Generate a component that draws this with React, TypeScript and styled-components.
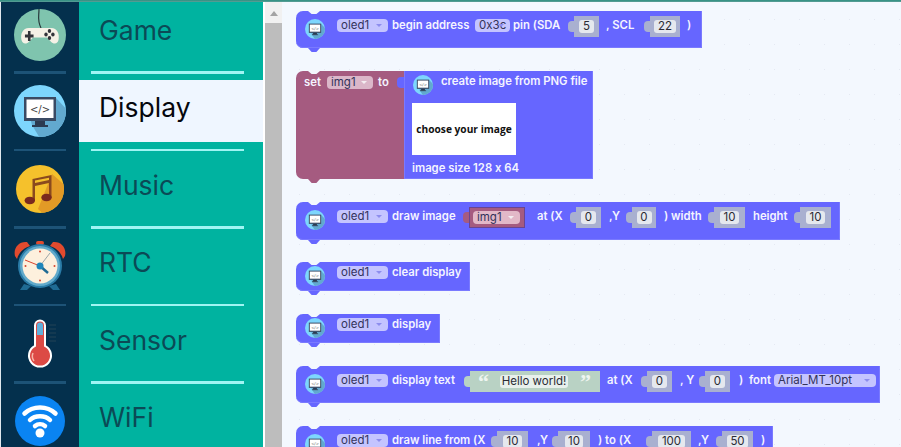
import React from "react";
import styled, { createGlobalStyle } from "styled-components";

const Global = createGlobalStyle`
  html, body { margin: 0; padding: 0; width: 901px; height: 447px; overflow: hidden; background: #f3f8fe; }
  * { box-sizing: border-box; }
`;

const Page = styled.div`
  width: 901px; height: 447px; display: flex; flex-direction: column; overflow: hidden;
  font-family: "Inter", "Noto Sans", sans-serif; font-feature-settings: "calt" 0;
`;
const TopLine = styled.div`
  height: 2px; flex: none;
  background: linear-gradient(#2c8f80, #5f9f98);
`;
const Main = styled.div`display: flex; flex: 1; min-height: 0;`;
const Rail = styled.div`
  width: 79px; flex: none; background: #04304d; border-left: 1px solid #dfe8ee;
  display: flex; flex-direction: column; align-items: center; overflow: hidden;
`;
const RailCell = styled.div<{ $h: number }>`
  height: ${p => p.$h}px; width: 100%; flex: none; display: flex; align-items: center; justify-content: center;
`;
const RailRule = styled.div`height: 2.5px; width: 52px; flex: none; background: #1d5377; margin-right: 1px;`;
const Menu = styled.div`
  width: 184px; flex: none; background: #00b3a0; display: flex; flex-direction: column; overflow: hidden;
`;
const MenuItem = styled.div<{ $active?: boolean; $first?: boolean }>`
  flex: none; height: ${p => (p.$first ? 62.5 : 62)}px; margin-bottom: 6.5px; margin-top: ${p => (p.$first ? 0 : 6.5)}px;
  padding: 0 0 7px 20px;
  display: flex; align-items: center;
  font-size: 26.5px; line-height: 1;
  color: ${p => (p.$active ? "#05070d" : "#0b4a56")};
  background: ${p => (p.$active ? "#eff6ff" : "transparent")};
`;
const MenuRule = styled.div`height: 2.5px; width: 153px; margin-left: 12px; background: #9ff5f3; flex: none;`;
const Gutter = styled.div`width: 2px; flex: none; background: #fff;`;
const Scrollbar = styled.div`width: 17px; flex: none; display: flex; flex-direction: column; background: #bdbdbd;`;
const ScrollButton = styled.div`
  height: 21px; background: #f1f1f1; flex: none; display: flex; justify-content: center; padding-top: 9px;
  &::before { content: ""; border-left: 4.5px solid transparent; border-right: 4.5px solid transparent; border-bottom: 5px solid #a3a3a3; height: 0; width: 0; }
`;
const Workspace = styled.div`
  flex: 1; position: relative; overflow: hidden; margin-left: 1px; background-color: #f3f8fe;
  background-image: radial-gradient(circle, #e4e9f2 0.8px, transparent 1px);
  background-size: 25px 25px; background-position: 4px 5px;
`;
const Block = styled.div<{ $y: number; $w: number; $h: number; $pt?: number }>`
  position: absolute; left: 13px; top: ${p => p.$y}px; width: ${p => p.$w}px; height: ${p => p.$h}px;
  background: #6666ff; border-radius: 7px 0 0 7px;
  display: flex; align-items: flex-start; padding: ${p => p.$pt ?? 8}px 0 0 8px; color: #fff;
  box-shadow: inset 0 -1px 0 #7a7aff, inset -1px 0 0 #7a7aff;
  &::before { content: ""; position: absolute; left: 12px; top: 0; width: 12px; height: 3px; background: #f3f8fe; clip-path: polygon(0 0, 100% 0, 70% 100%, 30% 100%); }
  &::after { content: ""; position: absolute; left: 12px; bottom: -4px; width: 12px; height: 4px; background: #6666ff; clip-path: polygon(0 0, 100% 0, 70% 100%, 30% 100%); }
`;
const Label = styled.span<{ $ml?: number; $w?: number }>`
  margin-left: ${p => p.$ml ?? 0}px; width: ${p => (p.$w ? `${p.$w}px` : "auto")}; flex: none;
  font-size: 11.3px; font-weight: 600; white-space: nowrap; line-height: 13px; color: #f4f4ff;
`;
const Drop = styled.div<{ $ml?: number; $w: number; $tone?: "violet" | "rose" | "pink" }>`
  margin-left: ${p => p.$ml ?? 0}px; width: ${p => p.$w}px; height: 13px; flex: none; border-radius: 4px;
  background: ${p => (p.$tone === "rose" ? "#dbb7c9" : p.$tone === "pink" ? "#e2b8c8" : "#c4c4ff")};
  color: #33335a; font-size: 11.5px; line-height: 13px; padding-left: 4px; position: relative;
  white-space: nowrap;
  &::after { content: ""; position: absolute; right: 6px; top: 5px; border-left: 3px solid transparent; border-right: 3px solid transparent; border-top: 3.5px solid ${p => (p.$tone ? "#f4eef2" : "#8d8dee")}; }
`;
const Socket = styled.div<{ $ml?: number; $w: number }>`
  margin-left: ${p => p.$ml ?? 0}px; margin-top: -3px; width: ${p => p.$w}px; height: 21px; flex: none; position: relative;
  background: #a9b0d0; display: flex; align-items: center; justify-content: center;
  &::before { content: ""; position: absolute; left: -6px; top: 5px; width: 6px; height: 11px; background: #a9b0d0; border-radius: 4px 0 0 4px; }
`;
const NumField = styled.div`
  height: 13px; min-width: 15px; padding: 0 3.5px; border-radius: 3px; background: #e5e8ee; color: #2b2b33;
  font-size: 11.5px; line-height: 13px; text-align: center;
`;
const VarSocket = styled.div<{ $ml: number; $w: number }>`
  margin-left: ${p => p.$ml}px; margin-top: -3px; width: ${p => p.$w}px; height: 21px; flex: none; position: relative;
  background: #a55b80; border: 1px solid #6a4590; display: flex; align-items: center; padding-left: 3px;
  &::before { content: ""; position: absolute; left: -7px; top: 4px; width: 6px; height: 11px; background: #a55b80; border-radius: 4px 0 0 4px; }
`;
const TextSocket = styled.div<{ $ml: number; $w: number }>`
  margin-left: ${p => p.$ml}px; margin-top: -3px; width: ${p => p.$w}px; height: 21px; flex: none; position: relative; background: #b9d2c4;
  display: flex; align-items: center; color: #eef5f0;
  &::before { content: ""; position: absolute; left: -6px; top: 5px; width: 6px; height: 11px; background: #b9d2c4; border-radius: 4px 0 0 4px; }
`;
const Quote = styled.span<{ $ml: number }>`
  margin-left: ${p => p.$ml}px; width: 10px; flex: none; text-align: center;
  font-family: "Liberation Serif", serif; font-weight: 700; font-size: 22px; line-height: 13px; height: 13px;
`;
const TextField = styled.div`
  width: 68px; height: 13px; margin-left: 12px; border-radius: 3px; background: #e8f0ec; color: #2b2b33; font-size: 11.5px; line-height: 13px; text-align: center;
`;
const SetBlock = styled.div`
  position: absolute; left: 13px; top: 69px; width: 108px; height: 108px; background: #a55b80; border-radius: 7px 0 0 7px;
  padding: 5px 0 0 8px; display: flex; align-items: flex-start; color: #fff;
  &::before { content: ""; position: absolute; left: 12px; top: 0; width: 12px; height: 3px; background: #f3f8fe; clip-path: polygon(0 0, 100% 0, 70% 100%, 30% 100%); }
  &::after { content: ""; position: absolute; left: 12px; bottom: -4px; width: 12px; height: 4px; background: #a55b80; clip-path: polygon(0 0, 100% 0, 70% 100%, 30% 100%); }
`;
const ImageBlock = styled.div`
  position: absolute; left: 121px; top: 69px; width: 189px; height: 108px; background: #6666ff;
  padding: 4px 0 0 8px; display: flex; flex-direction: column; align-items: flex-start; color: #fff;
  box-shadow: inset 0 -1px 0 #7a7aff, inset -1px 0 0 #7a7aff, inset 1px 0 0 #7a7aff;
  &::before { content: ""; position: absolute; left: -7px; top: 6px; width: 7px; height: 11px; background: #6666ff; border-radius: 4px 0 0 4px; }
`;
const ImageHead = styled.div`display: flex; align-items: flex-start; height: 28px; flex: none;`;
const ImagePicker = styled.div`
  width: 104px; height: 52px; flex: none; background: #fff; display: flex; align-items: center; justify-content: center;
  font-family: "Open Sans", sans-serif; font-weight: 700; font-size: 10.2px; color: #111;
`;
const ImageCaption = styled(Label)`margin-top: 7px;`;
const IconSlot = styled.div`width: 21px; height: 20px; flex: none; display: flex; justify-content: center;`;
const ShiftUp = styled.div`margin-top: -12px; display: flex;`;

const Pad = () => (
  <ShiftUp>
    <svg width="52" height="60" viewBox="0 0 52 60">
      <circle cx="26" cy="34" r="26" fill="#7fc4ae" />
      <path d="M27 27 C 23 19 25 16 25 8" stroke="#283a3c" strokeWidth="1.200" fill="none" />
      <g transform="translate(26 35) scale(.86 1) translate(-26 -32)">
        <path d="M13 24 H39 C 46 24 49 30 47.500 36 C 46.500 40 42 41 38 37 L34 33.500 H18 L14 37 C 10 41 5.500 40 4.500 36 C 3 30 6 24 13 24 Z" fill="#f5f1e6" />
        <path d="M12 27 h3 v3.500 h3.500 v3 h-3.500 v3.500 h-3 v-3.500 h-3.500 v-3 h3.500 z" fill="#33343a" />
        <circle cx="37" cy="27" r="2" fill="#33343a" /><circle cx="37" cy="34" r="2" fill="#33343a" /><circle cx="33" cy="30.500" r="2" fill="#33343a" /><circle cx="41" cy="30.500" r="2" fill="#33343a" />
      </g>
    </svg>
  </ShiftUp>
);
const MonitorIcon = ({ size, id }: { size: number; id: string }) => (
  <svg width={size} height={size} viewBox="0 0 52 52">
    <defs><clipPath id={id}><circle cx="26" cy="26" r="26" /></clipPath></defs>
    <circle cx="26" cy="26" r="26" fill="#7dd6fd" />
    <path d="M10 13 L42 13 L58 30 L58 60 L30 60 L18 40 Z" fill="#62a9cf" clipPath={`url(#${id})`} />
    <rect x="10" y="12" width="32" height="24" fill="#3a4a63" />
    <rect x="12.500" y="14.500" width="27" height="18.500" fill="#fff" />
    <rect x="21" y="36" width="10" height="4.500" fill="#2c3a50" />
    <rect x="18" y="40" width="16" height="2" fill="#2c3a50" />
    <text x="26" y="27.500" fontSize="10" fontFamily="DejaVu Sans, sans-serif" textAnchor="middle" fill="#444">{"</>"}</text>
  </svg>
);
const Music = () => (
  <svg width="48" height="48" viewBox="0 0 48 48">
    <defs><clipPath id="mu"><circle cx="24" cy="24" r="24" /></clipPath></defs>
    <circle cx="24" cy="24" r="24" fill="#f5c12c" />
    <path d="M36 9 L60 30 L40 60 L22 44 Z" fill="#e29a26" clipPath="url(#mu)" />
    <path d="M16.500 14 L35.500 10 V33 H33 V18 L19 21 V36 H16.500 Z" fill="#8a4a1e" />
    <path d="M19 15.500 L33 12.700 V15 L19 18 Z" fill="#f5c12c" />
    <ellipse cx="13.800" cy="35.500" rx="5.200" ry="3.800" fill="#7a2a1e" />
    <ellipse cx="30.500" cy="32.500" rx="5.200" ry="3.800" fill="#7a2a1e" />
  </svg>
);
const Clock = () => (
  <svg width="54" height="52" viewBox="0 0 54 52">
    <path d="M2 16 C 0 8 6 1 14 2 L 17 6 C 11 8 6 12 4 19 Z" fill="#e14a2e" />
    <path d="M52 16 C 54 8 48 1 40 2 L 37 6 C 43 8 48 12 50 19 Z" fill="#e14a2e" />
    <rect x="23" y="1" width="8" height="4" rx="2" fill="#e14a2e" />
    <path d="M11 44 L7 50 H14 L18 46 Z M43 44 L47 50 H40 L36 46 Z" fill="#1f6b94" />
    <circle cx="27" cy="26" r="22" fill="#2a7ca8" />
    <circle cx="27" cy="26" r="20" fill="#62aacb" />
    <circle cx="27" cy="26" r="17.500" fill="#fdf0dd" />
    <path d="M27 26 L37 13" stroke="#9aa6a8" strokeWidth="1" />
    <path d="M27 26 L12 20" stroke="#d9442e" strokeWidth="1" />
    <path d="M27 26 L35 33" stroke="#1f6b94" strokeWidth="2.500" />
    <circle cx="27" cy="26" r="3.500" fill="#1f86ba" />
    <g fill="#d9442e"><circle cx="27" cy="11.500" r="1" /><circle cx="27" cy="40.500" r="1" /><circle cx="12.500" cy="26" r="1" /><circle cx="41.500" cy="26" r="1" /></g>
  </svg>
);
const Thermo = () => (
  <svg width="30" height="48" viewBox="0 0 30 48" overflow="visible">
    <path d="M10 5.500 a5 5 0 0 1 10 0 V25.800 a11 11 0 1 1 -10 0 Z" fill="#dc4a45" stroke="#fff" strokeWidth="2" />
    <path d="M12 5.500 a3 3 0 0 1 6 0 V15 H12 Z" fill="#62b0dc" />
    <path d="M9 41 a8 8 0 0 1 -1 -8" stroke="#f6b6a8" strokeWidth="1.500" fill="none" />
    <g stroke="#234257" strokeWidth="1"><path d="M24 5 h7 M24 9 h7 M24 13 h7 M24 17 h7 M24 21 h7" /></g>
  </svg>
);
const Wifi = () => (
  <svg width="50" height="50" viewBox="0 0 50 50">
    <circle cx="25" cy="25" r="25" fill="#0a84f2" />
    <g stroke="#fff" strokeWidth="4.500" fill="none" strokeLinecap="round">
      <path d="M9.500 17.500 C 18 9.500 32 9.500 40.500 17.500" />
      <path d="M15 24 C 20 19 30 19 35 24" />
      <path d="M20 30 C 23 27.500 27 27.500 30 30" />
    </g>
    <circle cx="25" cy="37" r="4.500" fill="#fff" />
  </svg>
);

const BlockIcon = ({ id }: { id: string }) => <IconSlot><MonitorIcon size={20} id={id} /></IconSlot>;
const Num = ({ ml, w, v }: { ml: number; w: number; v: string }) => (
  <Socket $ml={ml} $w={w}><NumField>{v}</NumField></Socket>
);
const Oled = ({ id }: { id: string }) => (<><BlockIcon id={id} /><Drop $ml={12} $w={51}>oled1</Drop></>);

export default function App() {
  return (
    <Page>
      <Global />
      <TopLine />
      <Main>
        <Rail>
          <RailCell $h={69}><Pad /></RailCell>
          <RailRule />
          <RailCell $h={75}><MonitorIcon size={52} id="rail" /></RailCell>
          <RailRule />
          <RailCell $h={75}><Music /></RailCell>
          <RailRule />
          <RailCell $h={75}><Clock /></RailCell>
          <RailRule />
          <RailCell $h={75}><Thermo /></RailCell>
          <RailRule />
          <RailCell $h={75}><Wifi /></RailCell>
        </Rail>
        <Menu>
          <MenuItem $first>Game</MenuItem>
          <MenuRule />
          <MenuItem $active>Display</MenuItem>
          <MenuRule />
          <MenuItem>Music</MenuItem>
          <MenuRule />
          <MenuItem>RTC</MenuItem>
          <MenuRule />
          <MenuItem>Sensor</MenuItem>
          <MenuRule />
          <MenuItem>WiFi</MenuItem>
        </Menu>
        <Gutter />
        <Scrollbar><ScrollButton /></Scrollbar>
        <Workspace>
          <Block $y={9} $w={406} $h={37}>
            <Oled id="b1" />
            <Label $ml={4} $w={79}>begin address</Label>
            <Drop $ml={4} $w={35}>0x3c</Drop>
            <Label $ml={3} $w={48}>pin (SDA</Label>
            <Num ml={13} w={25} v="5" />
            <Label $ml={7} $w={34}>, SCL</Label>
            <Num ml={10} w={30} v="22" />
            <Label $ml={7}>)</Label>
          </Block>

          <SetBlock>
            <Label $w={19}>set</Label>
            <Drop $ml={4} $w={46} $tone="rose">img1</Drop>
            <Label $ml={5}>to</Label>
          </SetBlock>
          <ImageBlock>
            <ImageHead>
              <BlockIcon id="b2" />
              <Label $ml={8}>create image from PNG file</Label>
            </ImageHead>
            <ImagePicker>choose your image</ImagePicker>
            <ImageCaption>image size 128 x 64</ImageCaption>
          </ImageBlock>

          <Block $y={200} $w={544} $h={38}>
            <Oled id="b3" />
            <Label $ml={4} $w={63}>draw image</Label>
            <VarSocket $ml={14} $w={56}><Drop $w={47} $tone="pink">img1</Drop></VarSocket>
            <Label $ml={12} $w={26}>at (X</Label>
            <Num ml={13} w={25} v="0" />
            <Label $ml={8} $w={11}>,Y</Label>
            <Num ml={12} w={24} v="0" />
            <Label $ml={8} $w={36}>) width</Label>
            <Num ml={14} w={31} v="10" />
            <Label $ml={8} $w={33}>height</Label>
            <Num ml={14} w={31} v="10" />
          </Block>

          <Block $y={260} $w={174} $h={29} $pt={4}>
            <Oled id="b4" />
            <Label $ml={4}>clear display</Label>
          </Block>

          <Block $y={312} $w={144} $h={29} $pt={4}>
            <Oled id="b5" />
            <Label $ml={4}>display</Label>
          </Block>

          <Block $y={364} $w={584} $h={37}>
            <Oled id="b6" />
            <Label $ml={4} $w={64}>display text</Label>
            <TextSocket $ml={14} $w={130}>
              <Quote $ml={8}>“</Quote>
              <TextField>Hello world!</TextField>
              <Quote $ml={12}>”</Quote>
            </TextSocket>
            <Label $ml={7} $w={25}>at (X</Label>
            <Num ml={15} w={25} v="0" />
            <Label $ml={8} $w={14}>, Y</Label>
            <Num ml={11} w={25} v="0" />
            <Label $ml={9} $w={4}>)</Label>
            <Label $ml={6} $w={24}>font</Label>
            <Drop $ml={1} $w={102}>Arial_MT_10pt</Drop>
          </Block>

          <Block $y={424} $w={477} $h={38}>
            <Oled id="b7" />
            <Label $ml={4} $w={91}>draw line from (X</Label>
            <Num ml={14} w={31} v="10" />
            <Label $ml={9} $w={11}>,Y</Label>
            <Num ml={10} w={32} v="10" />
            <Label $ml={8} $w={40}>) to (X</Label>
            <Num ml={14} w={39} v="100" />
            <Label $ml={7} $w={11}>,Y</Label>
            <Num ml={13} w={31} v="50" />
            <Label $ml={8}>)</Label>
          </Block>
        </Workspace>
      </Main>
    </Page>
  );
}
